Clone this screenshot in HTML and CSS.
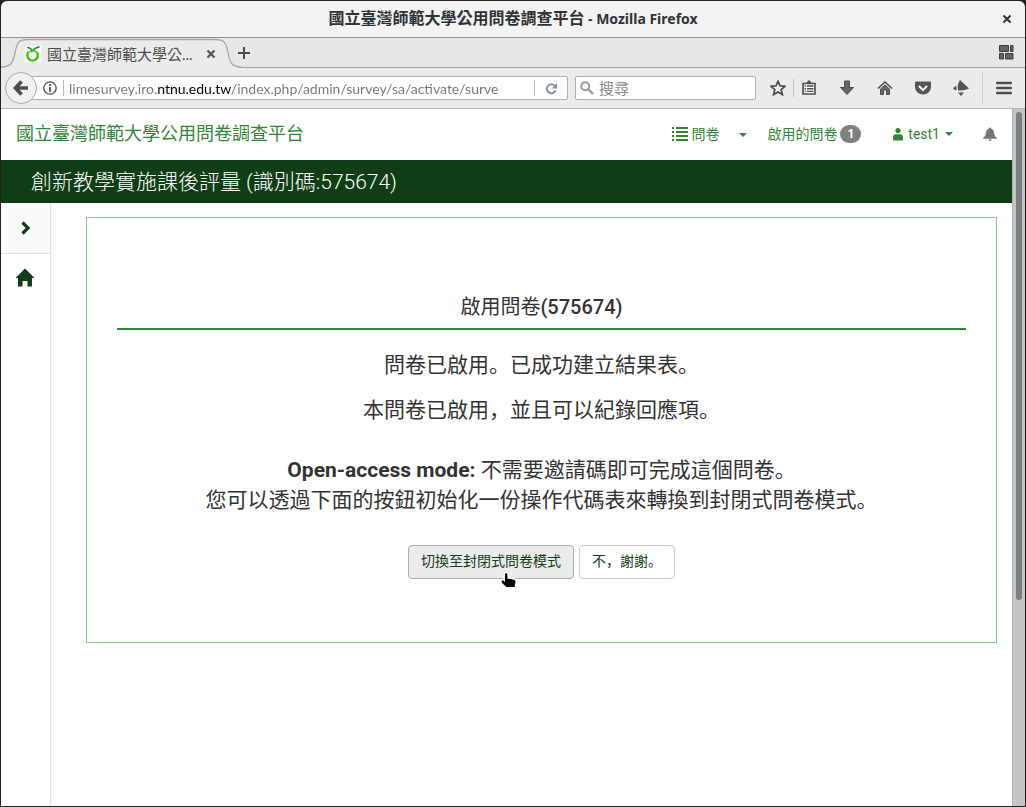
FILE: index.html
```html
<!DOCTYPE html>
<html lang="zh-Hant">
<head>
<meta charset="utf-8">
<meta name="viewport" content="width=device-width, initial-scale=1">
<title>國立臺灣師範大學公用問卷調查平台</title>
<link rel="stylesheet" href="styles.css">
</head>
<body>
<div class="window">
  <header class="titlebar">
    <span class="window-title"><span class="window-title-cjk">國立臺灣師範大學公用問卷調查平台</span> - Mozilla Firefox</span>
    <button class="icon-btn window-close" aria-label="Close window"><svg width="10" height="10" viewBox="0 0 10 10"><path d="M1.500 1.500l7 7M8.500 1.500l-7 7" stroke="#2e3436" stroke-width="2"/></svg></button>
  </header>

  <div class="tabstrip">
    <div class="tab">
      <svg class="tab-shape" viewBox="0 0 240 32" width="240" height="32"><path d="M0 30.500C10 30.500 12 26 14 16C16 5 18 2.500 27 2.500H214C223 2.500 225 5 227 16C229 26 231 30.500 240 30.500V32H0z" fill="#ebebe9"/><path d="M0 30C10 30 12 26 14 16C16 5 18 2.500 27 2.500H214C223 2.500 225 5 227 16C229 26 231 30 240 30" fill="none" stroke="#a3a8ae" stroke-width="1.300"/></svg>
      <svg class="favicon" width="16" height="16" viewBox="0 0 16 16"><rect width="16" height="16" fill="#fff"/><path d="M3.500 6A5.200 5.200 0 1 0 11.500 6" fill="none" stroke="#3fc30c" stroke-width="2.600"/><path d="M2 1.500Q6 1.500 7 5Q10 1.500 14.500 .8" fill="none" stroke="#12984b" stroke-width="1.700"/><path d="M4 6Q8 3.500 11.500 6" fill="none" stroke="#3fc30c" stroke-width="1.300"/></svg>
      <span class="tab-label">國立臺灣師範大學公...</span>
      <button class="icon-btn tab-close" aria-label="Close tab"><svg width="10" height="10" viewBox="0 0 10 10"><path d="M1.500 1.500l7 7M8.500 1.500l-7 7" stroke="#555" stroke-width="2.200"/></svg></button>
    </div>
    <button class="icon-btn new-tab" aria-label="New tab"><svg width="14" height="14" viewBox="0 0 14 14"><path d="M7 1v12M1 7h12" stroke="#4c4c4c" stroke-width="2"/></svg></button>
    <button class="icon-btn groups" aria-label="Tab groups"><svg width="15" height="15" viewBox="0 0 15 15" fill="#636363" stroke="#3d3d3d"><path d="M.5.5h9v6h-9zM11.500.5h2.500v6h-2.500zM.5 8.500h4v5.500h-4zM6.500 8.500h7.500v5.500H6.500z"/></svg></button>
  </div>

  <div class="toolbar">
    <button class="icon-btn back" aria-label="Back"><svg width="16" height="16" viewBox="0 0 16 16"><path d="M8.500 1.500L2.500 8l6 6.500M3 8h12" fill="none" stroke="#4c4c4c" stroke-width="3.600"/></svg></button>
    <div class="urlbar">
      <svg width="14" height="14" viewBox="0 0 14 14"><circle cx="7" cy="7" r="6.200" fill="none" stroke="#4c4c4c" stroke-width="1.300"/><path d="M7 3v2M7 6v5" stroke="#4c4c4c" stroke-width="1.800"/></svg>
      <span class="field-rule"></span>
      <input class="url" type="text" aria-label="URL" value="limesurvey.iro.ntnu.edu.tw/index.php/admin/survey/sa/activate/surve">
      <span class="field-rule"></span>
      <button class="icon-btn reload" aria-label="Reload"><svg width="13" height="13" viewBox="0 0 13 13"><path d="M9.500 3.500A4.500 4.500 0 1 0 10.500 8.500" fill="none" stroke="#8494a6" stroke-width="2"/><path d="M12 1v5.500H6.500z" fill="#8494a6"/></svg></button>
    </div>
    <div class="searchbar">
      <svg width="14" height="14" viewBox="0 0 14 14"><circle cx="5.200" cy="5.200" r="4" fill="none" stroke="#999" stroke-width="2"/><path d="M8 8l5 5" stroke="#999" stroke-width="2.400"/></svg>
      <input class="search" type="text" aria-label="搜尋" placeholder="搜尋">
    </div>
    <div class="tools">
      <button class="icon-btn" aria-label="Bookmark"><svg width="16" height="16" viewBox="0 0 16 16"><path d="M8 1.200l2 4.600 5 .5-3.800 3.300 1.200 5L8 12l-4.400 2.600 1.200-5L1 6.300l5-.5z" fill="none" stroke="#4c4c4c" stroke-width="1.700"/></svg></button>
      <span class="tool-rule"></span>
      <button class="icon-btn" aria-label="Library"><svg width="14" height="16" viewBox="0 0 14 16"><path d="M1 3.500h12v10.500H1zM4.500 3.500L7 1.200l2.500 2.300" fill="#fff" stroke="#4c4c4c" stroke-width="1.600"/><path d="M2.500 6h1.500M5 6h6.500M2.500 8.700h1.500M5 8.700h6.500M2.500 11.400h1.500M5 11.400h6.500" stroke="#4c4c4c" stroke-width="1.400"/></svg></button>
      <button class="icon-btn" aria-label="Downloads"><svg width="16" height="16" viewBox="0 0 16 16"><path d="M5.500 1h5v6.500h4L8 14.500 1.500 7.500h4z" fill="#666" stroke="#4c4c4c"/></svg></button>
      <button class="icon-btn" aria-label="Home"><svg width="16" height="16" viewBox="0 0 16 16"><path d="M1 8.500L8 2l7 6.500" fill="none" stroke="#4c4c4c" stroke-width="1.600"/><path d="M3.500 9L8 5l4.500 4v5.500H9.500V10h-3v4.500h-3z" fill="#666" stroke="#4c4c4c"/></svg></button>
      <button class="icon-btn" aria-label="Pocket"><svg width="16" height="16" viewBox="0 0 16 16"><path d="M1 1.500h14q1 0 1 1V7A8 7.500 0 0 1 0 7V2.500q0-1 1-1z" fill="#555"/><path d="M4 6l4 4 4-4" fill="none" stroke="#fff" stroke-width="2"/></svg></button>
      <button class="icon-btn" aria-label="Extension"><svg width="16" height="16" viewBox="0 0 16 16"><path d="M7 0l9 8.500q-5 2.500-11 2Q4 4 7 0zM3.500 5.500v5Q1 10 0 8zM5 12.500h6L8 16z" fill="#555"/></svg></button>
      <span class="menu-rule"></span>
      <button class="icon-btn" aria-label="Menu"><svg width="16" height="14" viewBox="0 0 16 14"><path d="M1.200 2h13.600M1.200 7h13.600M1.200 12h13.600" stroke="#4c4c4c" stroke-width="2.600" stroke-linecap="round"/></svg></button>
    </div>
  </div>

  <div class="viewport">
    <div class="page">
      <nav class="navbar">
        <a class="brand" href="#">國立臺灣師範大學公用問卷調查平台</a>
        <a class="nav-link" href="#"><svg width="16" height="14" viewBox="0 0 16 14"><path d="M0 1h2M0 5h2M0 9h2M0 13h2M4 1h12M4 5h12M4 9h12M4 13h12" stroke="#328637" stroke-width="2"/></svg><span>問卷</span></a>
        <button class="icon-btn caret-btn" aria-label="問卷選單"><span class="caret"></span></button>
        <a class="nav-link active-surveys" href="#">啟用的問卷<span class="badge">1</span></a>
        <a class="nav-link user" href="#"><svg width="10" height="13" viewBox="0 0 10 13" fill="#328637"><circle cx="5" cy="2.600" r="2.600"/><path d="M0 12.500V9.500Q0 6.500 3 6.200h4q3 .3 3 3.300v3z"/></svg><span>test1</span><span class="caret"></span></a>
        <button class="icon-btn bell" aria-label="Notifications"><svg width="14" height="14" viewBox="0 0 14 14" fill="#777"><path d="M6 1.500a1 1 0 0 1 2 0Q11 2.500 11 6q.2 3.500 3 5v.8H0V11q2.800-1.500 3-5 0-3.500 3-4.500zM5.300 12.500h3.400Q8.500 14 7 14t-1.700-1.500z"/></svg></button>
      </nav>
      <h1 class="survey-bar">創新教學實施課後評量 (識別碼:575674)</h1>
      <div class="body">
        <aside class="sidebar">
          <button class="icon-btn expand" aria-label="Expand"><svg width="10" height="14" viewBox="0 0 10 14"><path d="M1.500 1.500L7 7l-5.500 5.500" fill="none" stroke="#0f3e16" stroke-width="3.200"/></svg></button>
          <a class="home" href="#" aria-label="Home"><svg width="20" height="20" viewBox="0 0 20 20"><path d="M10 .5L19.500 10H17v8.500h-4.500V13h-5v5.500H3V10H.5z" fill="#0f3e16"/></svg></a>
        </aside>
        <main class="content">
          <section class="panel">
            <h2 class="panel-title">啟用問卷<span class="survey-id">(575674)</span></h2>
            <p class="text">問卷已啟用。已成功建立結果表。</p>
            <p class="text">本問卷已啟用，並且可以紀錄回應項。</p>
            <p class="text mode"><strong>Open-access mode:</strong> 不需要邀請碼即可完成這個問卷。<br>您可以透過下面的按鈕初始化一份操作代碼表來轉換到封閉式問卷模式。</p>
            <div class="actions">
              <button class="btn btn-hover">切換至封閉式問卷模式<svg class="pointer" width="18" height="18" viewBox="0 0 18 18"><path d="M5 2.500Q5 1 6.200 1T7.400 2.500V6.500L14 7.800Q16 8.300 16 10L15 16H6.500L2 11Q1 8.500 3 8.300L5 10z" fill="#fff" stroke="#fff" stroke-width="3" stroke-linejoin="round"/><path d="M5 2.500Q5 1 6.200 1T7.400 2.500V6.500L14 7.800Q15.500 8.300 15.500 10L14.500 15H6.500L2 11Q1 8.500 3 8.300L5 10z" fill="#000"/></svg></button>
              <button class="btn">不，謝謝。</button>
            </div>
          </section>
        </main>
      </div>
    </div>
    <div class="scrollbar"><div class="thumb"></div></div>
  </div>
</div>
</body>
</html>
```
FILE: styles.css
```css
* { box-sizing: border-box; }
body {
  margin: 0;
  background: #222;
  color: #333;
  font: 14px/20px Roboto, "Noto Sans CJK SC", sans-serif;
  font-feature-settings: "locl" 0;
}
a { color: #328637; text-decoration: none; }
svg { display: block; flex: none; }
.icon-btn {
  display: flex;
  align-items: center;
  justify-content: center;
  padding: 0;
  border: 0;
  background: none;
}
.window {
  display: flex;
  flex-direction: column;
  min-height: 100vh;
  padding: 1px;
}

/* Browser chrome */
.titlebar {
  position: relative;
  display: flex;
  align-items: center;
  justify-content: center;
  height: 37px;
  padding-bottom: 2px;
  border-bottom: 1px solid #909090;
  border-radius: 6px 6px 0 0;
  background: #f3f3f3;
}
.window-title {
  color: #2e3436;
  font: 700 14px/20px "Noto Sans", "Noto Sans CJK TC", sans-serif;
}
.window-title-cjk { font-size: 16px; }
.window-close { position: absolute; right: 13px; top: 13px; }
.tabstrip {
  display: flex;
  align-items: center;
  height: 30px;
  border-bottom: 1px solid #a0a0a0;
  background: #e7e7e5;
}
.tab {
  position: relative;
  display: flex;
  align-items: center;
  width: 232px;
  height: 30px;
  padding: 2px 17px 0 24px;
  gap: 6px;
}
.tab > * { position: relative; }
.tab .tab-shape { position: absolute; left: 0; top: -1px; }
.tab-label {
  flex: 1;
  color: #4c4c4c;
  font: 15px/20px Lato, "Noto Sans CJK TC", sans-serif;
  white-space: nowrap;
}
.new-tab { margin-left: 4px; }
.groups { margin-left: auto; margin-right: 11px; }
.toolbar {
  display: flex;
  align-items: center;
  height: 41px;
  padding: 0 13px 0 4px;
  border-bottom: 1px solid #b5b5b2;
  background: #ebebe9;
}
.back {
  z-index: 1;
  width: 32px;
  height: 32px;
  border: 1px solid #aaa;
  border-radius: 50%;
  background: #f1f1f0;
}
.urlbar, .searchbar {
  display: flex;
  align-items: center;
  height: 24px;
  border: 1px solid #b0b0ae;
  border-radius: 2px;
  background: #fff;
}
.urlbar { flex: 1; margin-left: -6px; padding-left: 11px; }
.field-rule { width: 1px; height: 16px; margin-left: 6px; background: #bbb; }
.url, .search {
  min-width: 0;
  height: 22px;
  padding: 0;
  border: 0;
  outline: 0;
  font: 15px/20px Lato, "Noto Sans CJK TC", sans-serif;
}
.url {
  flex: 1;
  margin: 0 18px 0 5px;
  font-size: 14px;
  background: linear-gradient(90deg, #777 88px, #000 88px, #000 162px, #777 162px);
  background-clip: text;
  -webkit-background-clip: text;
  -webkit-text-fill-color: transparent;
}
.reload { width: 32px; }
.searchbar { width: 181px; margin-left: 7px; padding-left: 4px; gap: 5px; }
.search { flex: 1; }
.search::placeholder { color: #888; }
.tools { display: flex; align-items: center; margin-left: 14px; }
.tools .icon-btn { width: 16px; margin-left: 22px; }
.tools .icon-btn:first-child { margin-left: 0; }
.tool-rule { width: 1px; height: 18px; margin-left: 7px; background: #c4c4c2; }
.tools .tool-rule + .icon-btn { margin-left: 7px; }
.menu-rule { width: 1px; height: 32px; margin-left: 13px; background: #d0d0ce; }
.tools .menu-rule + .icon-btn { margin-left: 13px; }

/* Web page */
.viewport { display: flex; flex: 1; }
.page { display: flex; flex: 1; flex-direction: column; background: #fff; }
.scrollbar {
  width: 13px;
  padding: 3px 3px 0;
  border-left: 1px solid #b0b1b0;
  background: #c4c6c5;
}
.thumb { height: 488px; border-radius: 3px; background: #7b7f7e; }
.navbar {
  display: flex;
  align-items: center;
  height: 51px;
  padding: 0 15px 1px;
}
.brand { margin-right: auto; font-size: 18px; }
.nav-link { display: flex; align-items: center; gap: 3px; }
.caret {
  border: 4px solid transparent;
  border-top-color: #328637;
  border-bottom: 0;
}
.caret-btn { margin: 2px 20px 0; }
.badge {
  padding: 2px 7px;
  border-radius: 10px;
  background: #808080;
  color: #fff;
  font: 700 12px/14px Roboto, sans-serif;
}
.user { gap: 5px; margin: 0 30px 0 32px; }
.survey-bar {
  margin: 0;
  padding: 7px 30px 6px;
  background: #0f3e16;
  color: #fff;
  font-size: 21px;
  font-weight: 300;
  line-height: 30px;
}
.body { display: flex; flex: 1; }
.sidebar {
  width: 50px;
  border-right: 1px solid #e0e0e0;
  box-shadow: 1px 0 4px #0000000f;
}
.expand {
  width: 100%;
  height: 51px;
  border-bottom: 1px solid #e0e0e0;
  background: #fafafa;
}
.home { display: flex; padding: 14px 0 0 14px; }
.content { flex: 1; padding: 14px 15px 0 35px; }
.panel {
  padding: 70px 30px 63px;
  border: 1px solid #88c78b;
  text-align: center;
}
.panel-title {
  margin: 0 0 20px;
  padding: 4px 0 6px;
  border-bottom: 2px solid #328637;
  font-size: 20px;
  font-weight: 400;
  line-height: 30px;
}
.survey-id { font-weight: 500; }
.text { margin: 0 0 15px; font-size: 21px; line-height: 30px; }
.text.mode { margin: 30px 0; }
.actions { display: flex; justify-content: center; gap: 5px; }
.btn {
  position: relative;
  height: 34px;
  padding: 0 12px 2px;
  border: 1px solid #ccc;
  border-radius: 4px;
  background: #fff;
  color: #0f3e16;
  font: inherit;
}
.btn-hover { border-color: #adadad; background: #ebebeb; }
.pointer { position: absolute; left: 91px; top: 26px; }
```
